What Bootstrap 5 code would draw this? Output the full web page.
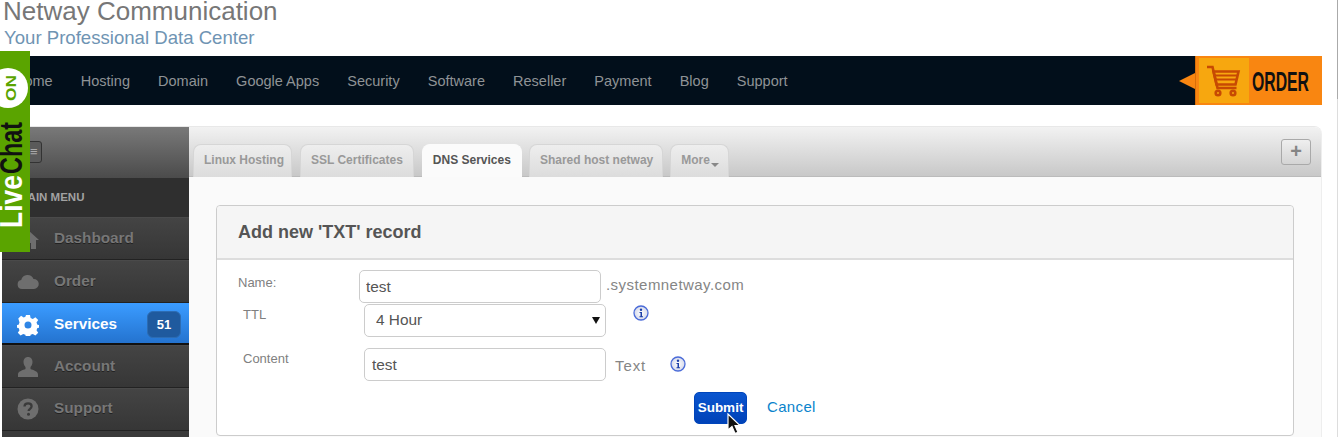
<!DOCTYPE html>
<html lang="en">
<head>
<meta charset="utf-8">
<title>Netway Communication</title>
<link href="https://cdn.jsdelivr.net/npm/bootstrap@5.3.0/dist/css/bootstrap.min.css" rel="stylesheet">
<style>
html,body{height:437px;overflow:hidden;background:#fff}
body{font-family:"Liberation Sans",Arial,sans-serif;font-size:13px;color:#777;position:relative}
.edge-line{width:1338px;height:437px;overflow:hidden;padding-right:15px;padding-left:2px;border-right:1px solid;border-image:linear-gradient(#aaa 100px,#ddd 100px) 1}
.brand-area{height:56px;margin-left:1px;overflow:hidden}
.brand-name{font-size:26px;line-height:24px;color:#777;margin-top:-1px;white-space:nowrap}
.brand-tag{font-size:18.6px;line-height:22px;color:#6f94b3;margin-left:1px;margin-top:4px;white-space:nowrap}
.top-nav{height:49px;background:#020f1b;margin-left:-2px}
.top-nav a{color:#8f9396;font-size:14.5px;text-decoration:none;padding:0 14.05px;line-height:49px;margin-top:2px}
.top-nav .nav-first{padding-left:14px}
.order-arrow{width:0;height:0;border-top:8px solid transparent;border-bottom:8px solid transparent;border-right:16px solid #f98611}
.order-box{width:127px;height:49px;background:#f98611;padding:2px 3px;border-left:1px solid #d96f08}
.order-cart{width:50px;height:45px;background:#f7a70f}
.panel-wrap{height:311px;margin-top:21px;border-top-right-radius:8px;border-top:1px solid #e8e8e8;overflow:hidden}
.side-col{width:187px;background:#3a3a3a}
.side-top{height:51px;background:linear-gradient(#797979,#4b4b4b);padding:14px 16px}
.side-toggle{width:24px;height:22px;border:1px solid #333;border-radius:3px;background:#5a5a5a;padding-left:11px;font-size:13px;line-height:19px;color:#aaa}
.side-head{height:39px;background:#2f2f2f;color:#a2a2a2;font-size:11.5px;font-weight:700;line-height:38px;padding-left:16px}
.side-item{height:43px;background:linear-gradient(#444,#363636);border-top:1px solid #4a4a4a;border-bottom:1px solid #222;color:#777;font-weight:700;font-size:15.3px;padding-left:15px;gap:15px;text-shadow:0 1px 0 #222}
.side-item svg{width:22px;height:22px;flex:none}
.side-item.is-active{background:linear-gradient(#3a9bff,#2473cf);color:#fff;border-top-color:#3a9bff;border-bottom:2px solid #111;height:42px;padding-top:2px;text-shadow:none}
.side-item.is-last{padding-bottom:2px}
.count-pill{margin-left:auto;margin-right:8px;width:34px;height:27px;background:#1f5a9e;border:1px solid #2c6cb3;border-radius:6px;color:#fff;font-size:13px;line-height:25px;text-align:center}
.main-col{background:#fafafa;border-right:1px solid #eee;min-width:0}
.tab-bar{height:50px;background:linear-gradient(#f2f2f2,#c8c8c8);border-bottom:1px solid #bbb;padding:17px 10px 0 4px;gap:8px}
.tab-item{height:33px;border:1px solid #d6d6d6;border-bottom:0;border-radius:8px 8px 0 0;background:linear-gradient(#eee,#dcdcdc);color:#999;font-size:12px;font-weight:700;padding:0 10px;line-height:31px;white-space:nowrap}
.tab-item.is-current{background:#fbfbfb;color:#555;border-color:#fbfbfb}
.tab-item.tab-tight{padding-right:7px}
.tab-item.tab-wide{padding-right:9px;margin-left:-1px}
.tab-item.tab-more{margin-left:-1px;padding-right:9px}
.more-caret{display:inline-block;width:0;height:0;border:4px solid transparent;border-top-color:#888;border-bottom:0;margin-left:1px;vertical-align:-3px}
.plus-btn{width:30px;height:26px;border:1px solid #a9a9a9;border-radius:3px;background:linear-gradient(#efefef,#d4d4d4);color:#858585;font-size:20px;font-weight:700;line-height:23px;text-align:center;margin-left:auto;margin-top:-5px}
.record-box{margin:28px 27px 0 27px;border:1px solid #ccc;border-radius:4px;background:#fff;height:231px}
.record-head{height:54px;background:#f5f5f5;border-bottom:2px solid #ddd;color:#555;font-size:18px;font-weight:700;line-height:53px;padding-left:21px;border-radius:4px 4px 0 0}
.form-rows{padding-top:10px}
.form-line{display:flex}
.form-line label{color:#808080;font-size:13px}
.form-line .form-control,.form-line .form-select{width:242px;height:33px;border:1px solid #ccc;border-radius:5px;color:#555;font-size:15.4px;padding:0 6px;box-shadow:none}
.form-line .form-select{padding:0 0 2px 11px;background-size:8px 7px;background-position:right 5px center;background-image:url("data:image/svg+xml,%3Csvg xmlns='http://www.w3.org/2000/svg' viewBox='0 0 8 7'%3E%3Cpath d='M0 0h8L4 7z' fill='%23111'/%3E%3C/svg%3E")}
.line-name label{width:142px;padding-left:21px;padding-top:3px}
.line-ttl{margin-top:1px}
.line-ttl label,.line-content label{width:143px;padding-left:26px;padding-top:1px}
.line-content{margin-top:11px}
.line-content .form-control{padding-left:7px}
.side-note{color:#858585;font-size:15px;letter-spacing:.45px}
.dom-note{margin:4px 0 0 5px}
.info-dot{width:16px;height:16px;flex:none}
.submit-btn{width:53px;height:32px;background:linear-gradient(#0a55cf,#0042b8);border:1px solid #0045bb;border-radius:5px;color:#fff;font-size:13.5px;font-weight:700;padding:0;line-height:28px}
.cancel-link{color:#0a83cc;font-size:15px;letter-spacing:.35px;text-decoration:none;margin-left:20px;margin-top:-2px}
.chat-tab{position:absolute;left:0;top:51px;width:30px;height:201px;background:#5aa400}
.mouse-pointer{position:absolute;left:727px;top:413px;width:14px;height:22px}
.info-a{margin-left:27px;margin-top:1px}
.note-text{margin:7px 0 0 9px;letter-spacing:.9px}
.info-b{margin-left:24px;margin-top:8px}
.action-row{padding-left:477px;margin-top:11px}
</style>
</head>
<body>
<div class="edge-line">
  <div class="brand-area">
    <div class="brand-name">Netway Communication</div>
    <div class="brand-tag">Your Professional Data Center</div>
  </div>
  <nav class="top-nav d-flex align-items-center">
    <a class="nav-first" href="#">Home</a>
    <a href="#">Hosting</a>
    <a href="#">Domain</a>
    <a href="#">Google Apps</a>
    <a href="#">Security</a>
    <a href="#">Software</a>
    <a href="#">Reseller</a>
    <a href="#">Payment</a>
    <a href="#">Blog</a>
    <a href="#">Support</a>
    <div class="order-arrow ms-auto"></div>
    <div class="order-box d-flex align-items-center">
      <div class="order-cart d-flex align-items-center justify-content-center">
        <svg width="36" height="34" viewBox="0 0 36 34" fill="none" stroke="#c74a03" stroke-width="2.6"><path d="M1 3h5.500l5 21h19"/><path d="M7.500 7.500h25l-3 13h-19z"/><path d="M9 11.500h22.500M10 15.500h20.500" stroke-width="2"/><circle cx="12" cy="29" r="2.300"/><circle cx="27" cy="29" r="2.300"/></svg>
      </div>
      <svg width="60" height="34" viewBox="0 0 60 34"><text x="3" y="27" textLength="57" lengthAdjust="spacingAndGlyphs" font-family="Liberation Sans" font-weight="700" font-size="27" fill="#111">ORDER</text></svg>
    </div>
  </nav>
  <div class="panel-wrap d-flex">
    <aside class="side-col">
      <div class="side-top"><div class="side-toggle">≡</div></div>
      <div class="side-head">MAIN MENU</div>
      <div class="side-item d-flex align-items-center">
        <svg viewBox="0 0 22 22" fill="#6e6e6e"><path d="M11 2 0 12h3v9h5v-6h6v6h5v-9h3z"/></svg>Dashboard
      </div>
      <div class="side-item d-flex align-items-center">
        <svg viewBox="0 0 22 22" fill="#6e6e6e"><path d="M5 18a4.500 4.500 0 0 1-.8-8.900A6.500 6.500 0 0 1 16.500 8 5 5 0 0 1 17 18z"/></svg>Order
      </div>
      <div class="side-item is-active d-flex align-items-center">
        <svg viewBox="0 0 22 22"><path fill="#fff" fill-rule="evenodd" d="M9 1h4l.6 3 2.200.9 2.600-1.700 2.800 2.800-1.700 2.600.9 2.200 3 .6v2l-3 .6-.9 2.200 1.700 2.600-2.800 2.800-2.600-1.700-2.200.9-.6 3H9l-.6-3-2.200-.9-2.600 1.700-2.800-2.800 1.700-2.600-.9-2.200-3-.6v-2l3-.6.9-2.200L1.300 4.600 4.100 1.800l2.600 1.700 1.700-.7zM11 7.500a3.500 3.500 0 1 0 0 7 3.500 3.500 0 0 0 0-7z"/></svg>Services
        <span class="count-pill">51</span>
      </div>
      <div class="side-item d-flex align-items-center">
        <svg viewBox="0 0 22 22" fill="#6e6e6e"><path d="M11 1c-3 0-4.500 2.300-4.500 5 0 2.200 1 4 2 5v2c-2.500 1.200-7.500 2-7.500 5.500V21h20v-2.500c0-3.500-5-4.300-7.500-5.500v-2c1-1 2-2.800 2-5 0-2.700-1.500-5-4.500-5z"/></svg>Account
      </div>
      <div class="side-item is-last d-flex align-items-center">
        <svg viewBox="0 0 22 22"><circle cx="11" cy="11" r="10.500" fill="#6e6e6e"/><path d="M7.500 8.500c0-2 1.500-3.200 3.600-3.200s3.500 1.200 3.500 3c0 2.500-3 2.500-3 4.700" fill="none" stroke="#3a3a3a" stroke-width="2.300"/><circle cx="11.500" cy="16.300" r="1.500" fill="#3a3a3a"/></svg>Support
      </div>
    </aside>
    <main class="main-col flex-grow-1">
      <div class="tab-bar d-flex">
        <div class="tab-item tab-tight">Linux Hosting</div>
        <div class="tab-item ssl-tab">SSL Certificates</div>
        <div class="tab-item is-current">DNS Services</div>
        <div class="tab-item tab-wide">Shared host netway</div>
        <div class="tab-item tab-more">More<span class="more-caret"></span></div>
        <div class="plus-btn">+</div>
      </div>
      <div class="record-box">
        <div class="record-head">Add new 'TXT' record</div>
        <form class="form-rows">
          <div class="form-line line-name">
            <label for="rec-name">Name:</label>
            <input id="rec-name" class="form-control" value="test">
            <span class="side-note dom-note">.systemnetway.com</span>
          </div>
          <div class="form-line line-ttl">
            <label for="rec-ttl">TTL</label>
            <div class="ms-1"></div>
            <select id="rec-ttl" class="form-select"><option>4 Hour</option></select>
            <svg class="info-dot info-a" viewBox="0 0 16 16"><defs><radialGradient id="ig"><stop offset="0" stop-color="#fff"/><stop offset="1" stop-color="#d5d9ea"/></radialGradient></defs><circle cx="8" cy="8" r="7" fill="url(#ig)" stroke="#4a6bd8" stroke-width="1.300"/><circle cx="8" cy="4.700" r="1.200" fill="#1c3fa8"/><path d="M6.500 7h2.500v4.300h1v1H6.500v-1h1V8H6.500z" fill="#1c3fa8"/></svg>
          </div>
          <div class="form-line line-content">
            <label for="rec-content">Content</label>
            <div class="ms-1"></div>
            <input id="rec-content" class="form-control" value="test">
            <span class="side-note note-text">Text</span>
            <svg class="info-dot info-b" viewBox="0 0 16 16"><circle cx="8" cy="8" r="7" fill="url(#ig)" stroke="#4a6bd8" stroke-width="1.300"/><circle cx="8" cy="4.700" r="1.200" fill="#1c3fa8"/><path d="M6.500 7h2.500v4.300h1v1H6.500v-1h1V8H6.500z" fill="#1c3fa8"/></svg>
          </div>
          <div class="action-row d-flex align-items-center">
            <button type="button" class="submit-btn">Submit</button>
            <a href="#" class="cancel-link">Cancel</a>
          </div>
        </form>
      </div>
    </main>
  </div>
</div>
<div class="chat-tab">
  <svg width="30" height="201" viewBox="0 0 30 201">
    <circle cx="8" cy="37" r="20" fill="#fff"/>
    <text transform="translate(16,50) rotate(-90)" font-family="Liberation Sans" font-weight="700" font-size="15" fill="#5aa400" textLength="26" lengthAdjust="spacingAndGlyphs">ON</text>
    <text transform="translate(22,177) rotate(-90)" font-family="Liberation Sans" font-weight="700" font-size="32" textLength="53" lengthAdjust="spacingAndGlyphs" fill="#fff">Live</text>
    <text transform="translate(22,123) rotate(-90)" font-family="Liberation Sans" font-weight="700" font-size="32" textLength="52" lengthAdjust="spacingAndGlyphs" fill="#111">Chat</text>
  </svg>
</div>
<svg class="mouse-pointer" viewBox="0 0 14 22"><path d="M1 1v16l4-3.500 3 7 3-1.300-3-6.700h5z" fill="#111" stroke="#fff" stroke-width="1.200"/></svg>
<script src="https://cdn.jsdelivr.net/npm/bootstrap@5.3.0/dist/js/bootstrap.bundle.min.js"></script>
</body>
</html>
